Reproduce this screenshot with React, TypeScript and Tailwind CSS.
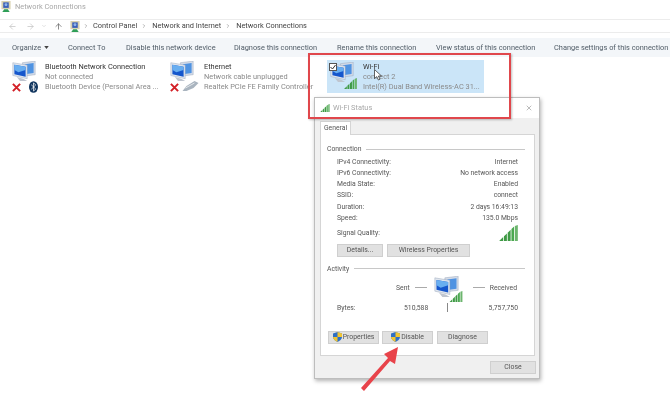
import { ArrowLeft, ArrowRight, ArrowUp, ChevronDown, ChevronRight, X } from "lucide-react";

// two overlapping blue monitors, used for every adapter
function Computers({ className }: { className?: string }) {
    return (
        <svg viewBox="0 0 30 26" className={className}>
            <path d="M13 2 L29 0 L29 17 L13 19 Z" fill="#d3dbe8" stroke="#8e9cb2" strokeWidth="0.5" />
            <path d="M16 4 L27 2.5 L27 15 L16 16.5 Z" fill="#4f93e2" />
            <path d="M1 2 L19 5 L19 22 L1 18 Z" fill="#dfe5ee" stroke="#8e9cb2" strokeWidth="0.5" />
            <path d="M3 4.5 L17 7 L17 19.6 L3 16.4 Z" fill="#1556cc" />
            <path d="M3 4.5 L17 7 L17 11 L8 14 L3 11 Z" fill="#68aef0" />
            <path d="M6 20 L14 22 L19 25 L10 25 Z" fill="#bfc5cf" />
        </svg>
    );
}

// address bar / title bar glyph
function CpIcon({ className }: { className?: string }) {
    return (
        <svg viewBox="0 0 10 12" className={className}>
            <rect x="0" y="0" width="10" height="9" fill="#d9d2b0" />
            <rect x="2" y="1.5" width="6" height="6" fill="#3a5fb8" />
            <circle cx="5" cy="4" r="1.6" fill="#8fb4ea" />
            <path d="M1 12 L3 9 H7 L9 12 Z" fill="#2f9e57" />
        </svg>
    );
}

function Bars({ className }: { className?: string }) {
    return (
        <svg viewBox="0 0 14 12" className={className}>
            <path d="M0 12 L3 9 V12 Z" fill="#3f9a45" />
            <path d="M3.6 12 V8.5 L5.8 6.4 V12 Z" fill="#3f9a45" />
            <path d="M6.4 12 V5.8 L8.6 3.6 V12 Z" fill="#3f9a45" />
            <path d="M9.2 12 V3 L11.2 1.2 V12 Z" fill="#4aa84f" />
            <path d="M11.8 12 V0.8 L14 0 V12 Z" fill="#6cb56e" />
        </svg>
    );
}

function Shield() {
    return (
        <svg viewBox="0 0 10 11" className="w-[9px] h-[10px] shrink-0">
            <path d="M5 0 L10 1.5 V5.5 C10 8 7.5 10 5 11 C2.5 10 0 8 0 5.5 V1.5 Z" fill="#2f6fc4" />
            <path d="M5 0 L10 1.5 V5.5 H5 Z" fill="#f2c530" />
            <path d="M5 5.5 V11 C2.5 10 0 8 0 5.5 Z" fill="#f2c530" />
        </svg>
    );
}

function RedX() {
    return (
        <svg viewBox="0 0 10 10" className="absolute left-0 top-[23px] w-[9px] h-[9px]">
            <path d="M1 1 L9 9 M9 1 L1 9" stroke="#d32027" strokeWidth="2.2" />
        </svg>
    );
}

function Adapter({ name, status, device, width, textLeft, children, selected }: {
    name: string;
    status: string;
    device: string;
    width: string;
    textLeft: string;
    children: React.ReactNode;
    selected?: boolean;
}) {
    return (
        <div className={`flex h-[33px] ${width} ${selected ? "bg-[#cbe5f8]" : ""}`}>
            <div className={`relative h-[33px] shrink-0 ${textLeft}`}>{children}</div>
            <div className="flex flex-col leading-[10px] pt-[2px] min-w-0 whitespace-nowrap">
                <span className="text-[#333]">{name}</span>
                <span className="text-[#8a8a8a]">{status}</span>
                <span className="text-[#8a8a8a]">{device}</span>
            </div>
        </div>
    );
}

function Btn({ label, width, shield }: { label: string; width: string; shield?: boolean }) {
    return (
        <div className={`h-[13px] ${width} bg-[#e1e1e1] border border-[#cfcfcf] flex items-center justify-center gap-[1px] text-[#555] text-[6.9px]`}>
            {shield && <Shield />}
            {label}
        </div>
    );
}

function Row({ label, value }: { label: string; value: string }) {
    return (
        <div className="flex justify-between h-[11.3px] items-center">
            <span>{label}</span>
            <span>{value}</span>
        </div>
    );
}

export default function App() {
    const tools = [
        ["Connect To", "w-[58px]"],
        ["Disable this network device", "w-[108px]"],
        ["Diagnose this connection", "w-[103px]"],
        ["Rename this connection", "w-[99px]"],
        ["View status of this connection", "w-[118px]"],
        ["Change settings of this connection", "w-[115px]"],
    ];

    return (
        <div className="relative w-[670px] h-[405px] overflow-hidden bg-white text-[7.4px] text-[#444] blur-[0.35px]" style={{ fontFamily: 'Roboto, sans-serif' }}>
            {/* title bar */}
            <div className="flex items-start h-[19px] pl-[1px] pt-[1px] gap-[4px] text-[#a8a8a8]">
                <CpIcon className="w-[10px] h-[11px]" />
                <span className="leading-[12px]">Network Connections</span>
            </div>

            {/* address bar */}
            <div className="flex items-center h-[14px] border-y border-[#ececec] text-[#c4c4c4]">
                <ArrowLeft className="w-[9px] h-[9px] ml-[8px]" />
                <ArrowRight className="w-[9px] h-[9px] ml-[9px]" />
                <ChevronDown className="w-[6px] h-[6px] ml-[6px]" />
                <ArrowUp className="w-[9px] h-[9px] ml-[7px] text-[#666]" />
                <CpIcon className="w-[10px] h-[11px] ml-[7px]" />
                <ChevronRight className="w-[6px] h-[6px] ml-[3px] text-[#777]" />
                <span className="ml-[4px] text-[#444]">Control Panel</span>
                <ChevronRight className="w-[6px] h-[6px] ml-[4px] text-[#777]" />
                <span className="ml-[5px] text-[#444]">Network and Internet</span>
                <ChevronRight className="w-[6px] h-[6px] ml-[4px] text-[#777]" />
                <span className="ml-[5px] text-[#444]">Network Connections</span>
            </div>

            {/* command bar */}
            <div className="flex items-center h-[19px] mt-[5px] pl-[12px] bg-[#f3f6f9] text-[#4f5b66] whitespace-nowrap">
                <span className="flex items-center w-[56px]">
                    Organize
                    <svg viewBox="0 0 6 4" className="w-[5px] h-[3px] ml-[3px]"><path d="M0 0 H6 L3 4 Z" fill="#444" /></svg>
                </span>
                {tools.map(([t, w]) => (
                    <span key={t} className={`shrink-0 ${w}`}>{t}</span>
                ))}
            </div>

            {/* adapters */}
            <div className="flex pl-[12px] pt-[3px]">
                <Adapter name="Bluetooth Network Connection" status="Not connected" device="Bluetooth Device (Personal Area ..." width="w-[158px]" textLeft="w-[33px]">
                    <Computers className="w-[24px] h-[21px] mt-[1px]" />
                    <RedX />
                    <svg viewBox="0 0 10 13" className="absolute left-[17px] top-[21px] w-[9px] h-[12px]">
                        <ellipse cx="5" cy="6.5" rx="5" ry="6.5" fill="#12365f" />
                        <path d="M2.5 4 L7.5 8.8 L5 11 V2 L7.5 4.2 L2.5 9" stroke="#fff" strokeWidth="0.8" fill="none" />
                    </svg>
                </Adapter>
                <Adapter name="Ethernet" status="Network cable unplugged" device="Realtek PCIe FE Family Controller" width="w-[157px]" textLeft="w-[34px]">
                    <Computers className="w-[24px] h-[21px] mt-[1px]" />
                    <RedX />
                    <svg viewBox="0 0 16 10" className="absolute left-[12px] top-[21px] w-[17px] h-[10px]">
                        <path d="M0 10 L4 5 L12 0 L16 2 L11 7 L4 10 Z" fill="#a9b4bf" />
                        <path d="M3 7 L12 2" stroke="#e3e7ea" strokeWidth="1" />
                    </svg>
                </Adapter>
                <Adapter name="Wi-Fi" status="connect  2" device="Intel(R) Dual Band Wireless-AC 31..." width="w-[157px]" textLeft="w-[36px]" selected>
                    <Computers className="w-[24px] h-[21px] ml-[3px] mt-[2px]" />
                    <div className="absolute left-[2px] top-[3px] w-[8px] h-[8px] bg-white border border-[#555] flex items-center justify-center">
                        <svg viewBox="0 0 6 6" className="w-[6px] h-[6px]"><path d="M0.5 3 L2.5 5 L5.5 1" stroke="#333" strokeWidth="1" fill="none" /></svg>
                    </div>
                    <Bars className="absolute left-[17px] top-[18px] w-[13px] h-[11px]" />
                </Adapter>
            </div>

            {/* status dialog */}
            <div className="absolute left-[314px] top-[97px] w-[226px] h-[282px] flex flex-col bg-[#f0f0f0] border border-[#bdbdbd] shadow-[1px_2px_4px_rgba(0,0,0,0.3)]">
                <div className="flex items-center h-[20px] shrink-0 bg-white pl-[5px] pr-[6px] gap-[3px] text-[#a8a8a8]">
                    <Bars className="w-[10px] h-[8px]" />
                    <span className="flex-1">Wi-Fi Status</span>
                    <X className="w-[8px] h-[8px] text-[#999]" />
                </div>
                <div className="flex flex-col flex-1 pl-[5px] pr-[4px] pt-[3px] text-[#555] text-[6.8px]">
                    <div className="self-start h-[14px] w-[31px] -mb-px relative bg-white border border-b-0 border-[#d5d5d5] flex items-center justify-center">General</div>
                    <div className="h-[222px] bg-white border border-[#d5d5d5] pl-[6px] pr-[9px] pt-[9px] flex flex-col">
                        <div className="flex items-center gap-[5px] h-[10px]">
                            <span>Connection</span>
                            <div className="flex-1 h-px bg-[#c8c8c8]" />
                        </div>
                        <div className="pl-[10px] pr-[7px] mt-[1px]">
                            <div className="mt-[1px]" />
                            <Row label="IPv4 Connectivity:" value="Internet" />
                            <Row label="IPv6 Connectivity:" value="No network access" />
                            <Row label="Media State:" value="Enabled" />
                            <Row label="SSID:" value="connect" />
                            <Row label="Duration:" value="2 days 16:49:13" />
                            <Row label="Speed:" value="135.0 Mbps" />
                            <div className="flex justify-between items-center h-[18px]">
                                <span>Signal Quality:</span>
                                <Bars className="w-[19px] h-[16px]" />
                            </div>
                            <div className="flex gap-[4px] mt-[2px]">
                                <Btn label="Details..." width="w-[46px]" />
                                <Btn label="Wireless Properties" width="w-[83px]" />
                            </div>
                        </div>
                        <div className="flex items-center gap-[5px] h-[10px] mt-[7px]">
                            <span>Activity</span>
                            <div className="flex-1 h-px bg-[#c8c8c8]" />
                        </div>
                        <div className="flex items-center h-[24px] mt-[2px] pl-[69px] pr-[8px]">
                            <span>Sent</span>
                            <div className="w-[12px] h-px bg-[#aaa] ml-[5px]" />
                            <div className="relative w-[32px] h-[24px] mx-[7px]">
                                <Computers className="w-[25px] h-[22px]" />
                                <Bars className="absolute left-[15px] top-[15px] w-[14px] h-[11px]" />
                            </div>
                            <div className="w-[12px] h-px bg-[#aaa]" />
                            <span className="ml-auto">Received</span>
                        </div>
                        <div className="flex items-center h-[10px] mt-[3px] pl-[10px] pr-[7px]">
                            <span className="w-[67px]">Bytes:</span>
                            <span className="w-[43px]">510,588</span>
                            <div className="w-px h-[9px] bg-[#888]" />
                            <span className="ml-auto">5,757,750</span>
                        </div>
                        <div className="flex gap-[3px] mt-[18px] pl-[1px]">
                            <Btn label="Properties" width="w-[51px]" shield />
                            <Btn label="Disable" width="w-[51px]" shield />
                            <div className="ml-[1px]">
                                <Btn label="Diagnose" width="w-[51px]" />
                            </div>
                        </div>
                    </div>
                    <div className="flex justify-end mt-[5px] -mr-[1px]">
                        <Btn label="Close" width="w-[46px]" />
                    </div>
                </div>
            </div>

            {/* annotations */}
            <div className="absolute left-[308px] top-[53px] w-[203px] h-[66px] border-2 border-[#e0474c] shadow-[1px_1px_2px_rgba(0,0,0,0.25)]" />
            <svg viewBox="0 0 670 405" className="absolute inset-0 w-[670px] h-[405px] pointer-events-none">
                <path d="M361 388 L364 391 L390 361 L395 364 L398 347 L384 354 L388 358 Z" fill="#e8434a" />
            </svg>
            {/* mouse pointer */}
            <svg viewBox="0 0 8 12" className="absolute left-[374px] top-[69px] w-[8px] h-[12px]">
                <path d="M0.5 0.5 V9.5 L2.8 7.6 L4.4 11 L6 10.2 L4.4 7 H7.5 Z" fill="#fff" stroke="#222" strokeWidth="0.7" />
            </svg>
        </div>
    );
}
